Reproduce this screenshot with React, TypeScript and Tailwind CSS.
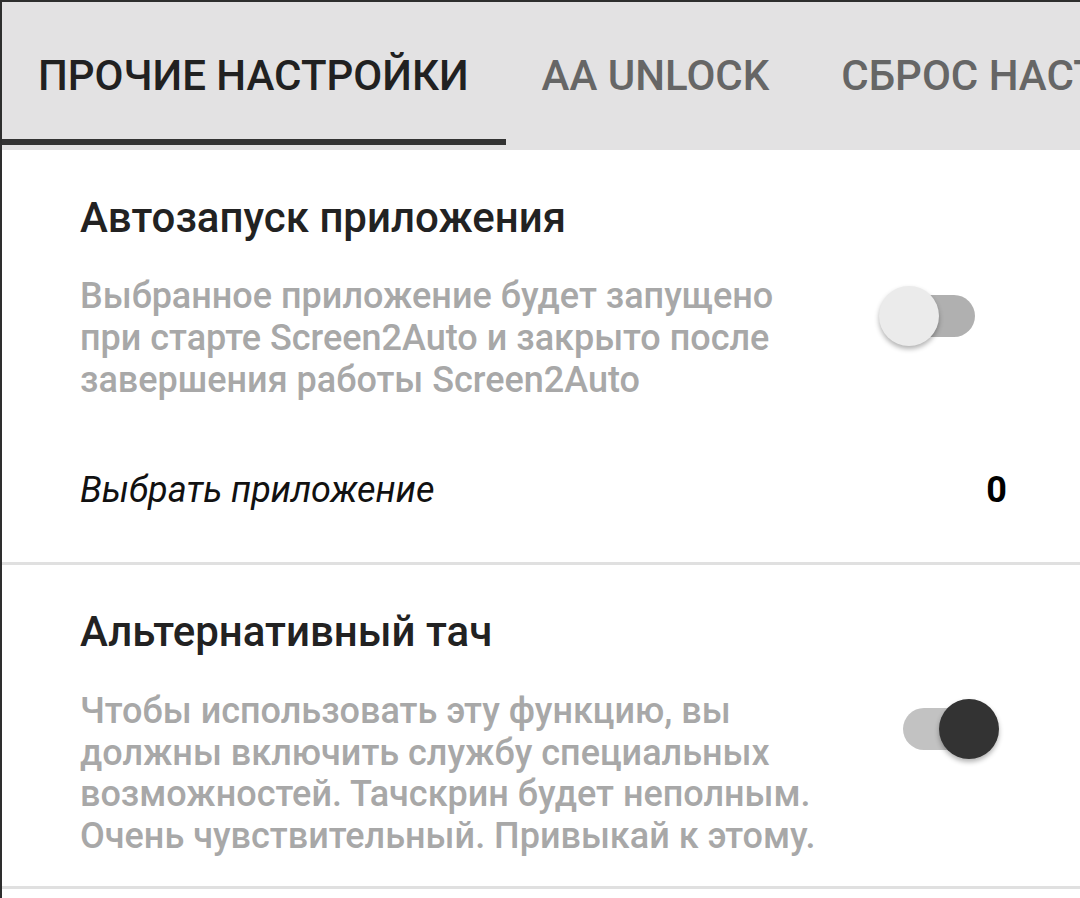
import { useState } from "react";

// Tabs
const tabs = ["ПРОЧИЕ НАСТРОЙКИ", "AA UNLOCK", "СБРОС НАСТРОЕК"];

// Toggle switch
function Toggle({ on, onClick }: { on: boolean; onClick: () => void }) {
  return (
    <button
      onClick={onClick}
      className="relative flex h-[60px] w-[120px] shrink-0 items-center justify-center"
    >
      <span
        className={`h-[42px] w-[72px] rounded-full ${
          on ? "bg-[#c2c2c2]" : "bg-[#b0b0b0]"
        }`}
      />
      <span
        className={`absolute top-0 h-[60px] w-[60px] rounded-full shadow-[0_3px_5px_rgba(0,0,0,0.3)] ${
          on ? "right-0 bg-[#333333]" : "left-0 bg-[#ebebeb]"
        }`}
      />
    </button>
  );
}

export default function App() {
  const [activeTab, setActiveTab] = useState(0);
  const [autoStart, setAutoStart] = useState(false);
  const [altTouch, setAltTouch] = useState(true);

  return (
    <div
      className="h-[898px] w-[1080px] overflow-hidden border-l-2 border-t-2 border-[#2e2e2e] bg-white"
      style={{ fontFamily: "Roboto, 'Noto Sans', sans-serif" }}
    >
      {/* Tab bar */}
      <div className="flex h-[148px] overflow-hidden bg-[#e3e2e3]">
        {tabs.map((tab, index) => (
          <button
            key={index}
            onClick={() => setActiveTab(index)}
            className={`relative flex shrink-0 items-center whitespace-nowrap pb-[2px] text-[42px] font-medium ${
              index === 0 ? "pl-[36px] pr-[37px]" : "px-[36px]"
            } ${activeTab === index ? "text-[#212121]" : "text-[#666666]"}`}
          >
            {tab}
            {activeTab === index && (
              <span className="absolute bottom-[5px] left-0 right-0 h-[6px] bg-[#333333]" />
            )}
          </button>
        ))}
      </div>

      {/* Autostart */}
      <div className="pl-[78px] pt-[45px]">
        <h3 className="text-[42px] font-medium leading-[46px] text-[#222222]">
          Автозапуск приложения
        </h3>
        <div className="mt-[34px] flex items-start justify-between pr-[81px]">
          <p className="w-[750px] text-[36px] font-medium leading-[42px] text-[#a8a8a8]">
            Выбранное приложение будет запущено при старте Screen2Auto и закрыто
            после завершения работы Screen2Auto
          </p>
          <div className="mt-[11px]">
            <Toggle on={autoStart} onClick={() => setAutoStart(!autoStart)} />
          </div>
        </div>
        <div className="mt-[69px] flex items-center justify-between pb-[52px] pr-[73px]">
          <span className="text-[36px] italic leading-[40px] text-[#111111]">
            Выбрать приложение
          </span>
          <span className="text-[36px] font-bold leading-[40px] text-black">
            0
          </span>
        </div>
      </div>

      <div className="h-[3px] bg-[#e0e0e0]" />

      {/* Alternative touch */}
      <div className="pb-[29px] pl-[78px] pt-[44px]">
        <h3 className="text-[42px] font-medium leading-[46px] text-[#222222]">
          Альтернативный тач
        </h3>
        <div className="mt-[36px] flex items-start justify-between pr-[81px]">
          <p className="w-[750px] text-[36px] font-medium leading-[41.5px] text-[#a8a8a8]">
            Чтобы использовать эту функцию, вы должны включить службу
            специальных возможностей. Тачскрин будет неполным. Очень
            чувствительный. Привыкай к этому.
          </p>
          <div className="mt-[8px]">
            <Toggle on={altTouch} onClick={() => setAltTouch(!altTouch)} />
          </div>
        </div>
      </div>

      <div className="h-[3px] bg-[#e0e0e0]" />
    </div>
  );
}
